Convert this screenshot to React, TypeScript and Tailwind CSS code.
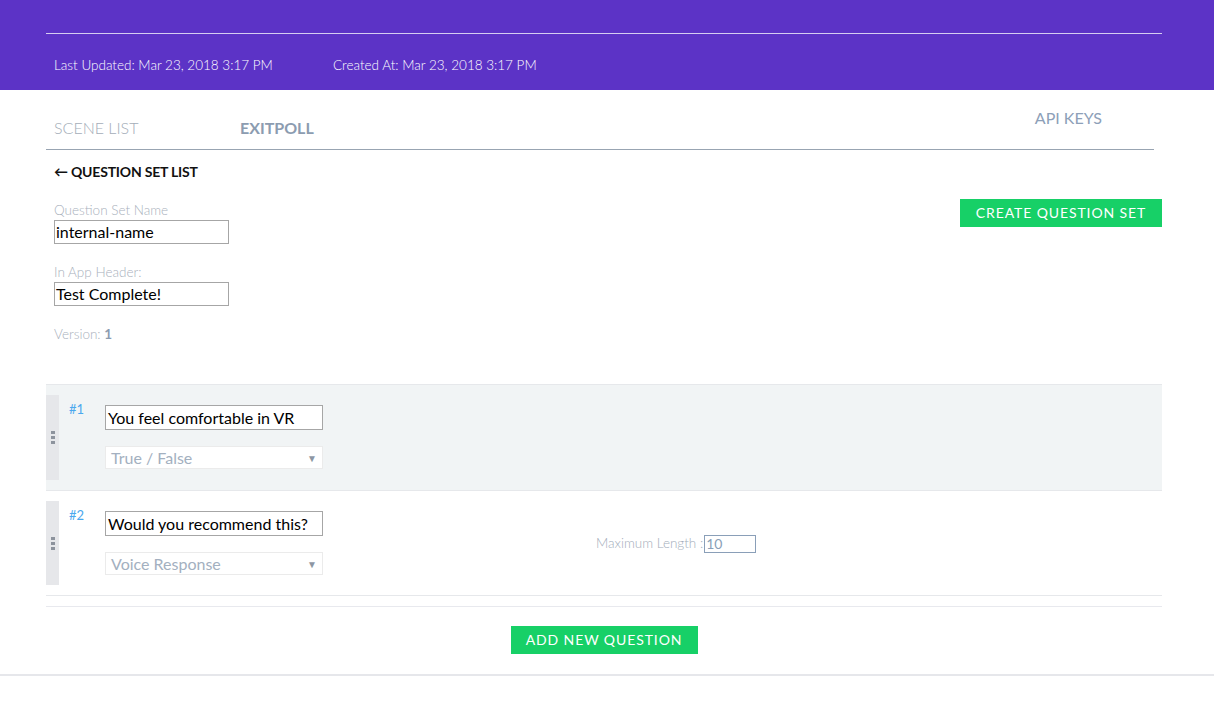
import React from "react";

function Handle() {
  return (
    <div className="w-[13px] self-stretch my-[10px] bg-[#e6e7ea] flex flex-col items-center justify-center gap-[2px]">
      <span className="block w-[4px] h-[3px] bg-[#8d939d]" />
      <span className="block w-[4px] h-[3px] bg-[#8d939d]" />
      <span className="block w-[4px] h-[3px] bg-[#8d939d]" />
    </div>
  );
}

function Select({ label }: { label: string }) {
  return (
    <div className="mt-[16px] w-[218px] h-[23px] bg-white border border-[#ebebeb] flex items-center justify-between pl-[5px] pr-[5px]">
      <span className="text-[16px] text-[#a3b0c0] leading-none">{label}</span>
      <span className="text-[10px] text-[#8d96a3] leading-none">▼</span>
    </div>
  );
}

function TextBox({ value }: { value: string }) {
  return (
    <div className="w-[175px] h-[24px] bg-white border border-[#a6a6a6] flex items-center px-[1px] text-[16px] text-black leading-none">
      {value}
    </div>
  );
}

function Question({
  n,
  text,
  type,
  bg,
  h,
  extra,
}: {
  n: number;
  text: string;
  type: string;
  bg: string;
  h: string;
  extra?: boolean;
}) {
  return (
    <div className={`flex ${h} ${bg} border-b border-[#e6e8eb]`}>
      <Handle />
      <div className="w-[46px] pl-[10px] pt-[18px] text-[13px] text-[#4aa8ee] leading-none">#{n}</div>
      <div className="pt-[20px] flex flex-col">
        <div className="w-[218px] h-[25px] bg-white border border-[#a6a6a6] flex items-center px-[2px] text-[16px] text-black leading-none">
          {text}
        </div>
        <Select label={type} />
      </div>
      {extra && (
        <div className="ml-[273px] mt-[2px] self-center flex items-center">
          <span className="text-[13.5px] font-light text-[#a3adba] leading-none">Maximum Length :</span>
          <div className="ml-[1px] w-[52px] h-[18px] border border-[#8a9fb8] flex items-center px-[1px] text-[14px] text-[#8a9fb8] leading-none">
            10
          </div>
        </div>
      )}
    </div>
  );
}

export default function App() {
  return (
    <div className="min-h-[713px] bg-white font-['Lato','Noto_Sans',sans-serif]">
      <header className="h-[90px] bg-[#5c33c6] pt-[33px] px-[46px]">
        <div className="w-[1116px] border-t border-[#d6cdf1]" />
        <div className="flex pl-[8px] mt-[23px] text-[13.5px] font-light text-white leading-[16px]">
          <span className="w-[279px]">Last Updated: Mar 23, 2018 3:17 PM</span>
          <span>Created At: Mar 23, 2018 3:17 PM</span>
        </div>
      </header>

      <main className="ml-[46px] w-[1116px]">
        <nav className="w-[1108px] h-[60px] border-b border-[#98a4b2] flex items-start">
          <div className="pt-[29px] pl-[8px] w-[194px] text-[16px] font-light text-[#a4adb8] leading-[18px]">SCENE LIST</div>
          <div className="pt-[29px] text-[16px] font-bold text-[#8c9cb0] leading-[18px]">EXITPOLL</div>
          <div className="ml-auto mr-[52px] pt-[19px] text-[16px] text-[#8da0b8] leading-[18px]">API KEYS</div>
        </nav>

        <div className="pl-[8px] pt-[14px] text-[14px] font-bold text-[#111] leading-[16px] tracking-[-0.2px]">← QUESTION SET LIST</div>

        <div className="flex pl-[8px] pt-[22px] h-[204px]">
          <div className="flex flex-col">
            <label className="text-[13.5px] font-light text-[#a9b1bc] leading-[16px]">Question Set Name</label>
            <div className="mt-[2px]">
              <TextBox value="internal-name" />
            </div>
            <label className="mt-[20px] text-[13.5px] font-light text-[#a9b1bc] leading-[16px]">In App Header:</label>
            <div className="mt-[2px]">
              <TextBox value="Test Complete!" />
            </div>
            <div className="mt-[20px] text-[13.5px] font-light text-[#a9b1bc] leading-[16px]">
              Version: <span className="font-bold text-[#8c9cb0]">1</span>
            </div>
          </div>
          <div className="ml-auto">
            <button className="block mt-[-3px] w-[202px] h-[28px] bg-[#17d067] text-white text-[14px] tracking-[0.9px] leading-none">
              CREATE QUESTION SET
            </button>
          </div>
        </div>

        <div className="border-t border-[#e6e8eb]">
          <Question n={1} text="You feel comfortable in VR" type="True / False" bg="bg-[#f1f4f5]" h="h-[106px]" />
          <Question n={2} text="Would you recommend this?" type="Voice Response" bg="bg-white" h="h-[105px]" extra />
        </div>

        <div className="mt-[10px] border-t border-[#e8e9ee] h-[68px] pt-[19px] flex justify-center">
          <button className="w-[187px] h-[28px] bg-[#17d067] text-white text-[14px] tracking-[0.9px] leading-none">
            ADD NEW QUESTION
          </button>
        </div>
      </main>
      <div className="border-t-2 border-[#e6e7eb]" />
    </div>
  );
}
